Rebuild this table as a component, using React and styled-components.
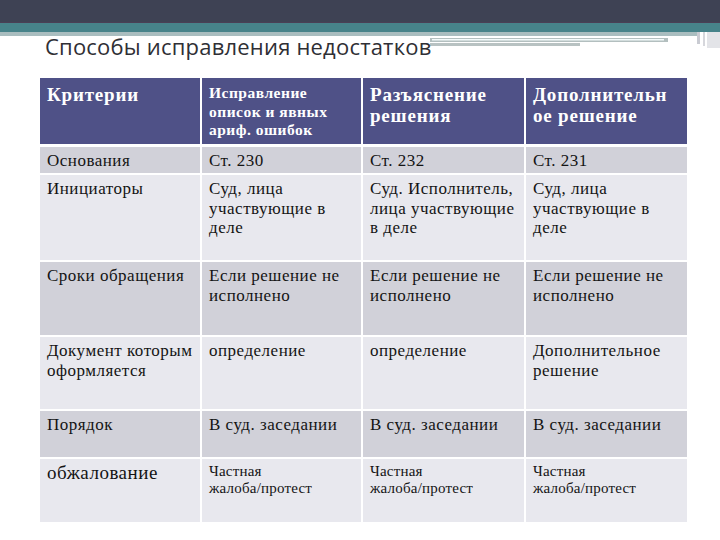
import React from 'react';
import styled, { createGlobalStyle } from 'styled-components';

const GlobalStyle = createGlobalStyle`
  html, body {
    margin: 0;
    padding: 0;
    background: #ffffff;
  }
  body {
    width: 720px;
    height: 540px;
    overflow: hidden;
  }
`;

const serif = '"Liberation Serif", "Times New Roman", serif';

const Slide = styled.div`
  position: relative;
  width: 720px;
  height: 540px;
  background: #ffffff;
`;

const DarkBand = styled.div`
  height: 23px;
  background: #3e4254;
  border-bottom: 1px solid #4a3f55;
  box-sizing: border-box;
`;

const TealBand = styled.div`
  height: 9px;
  background: #47838a;
`;

const TitleRow = styled.div`
  position: relative;
  height: 46px;
  padding-left: 45px;
  box-sizing: border-box;
`;

const Decor = styled.svg`
  position: absolute;
  left: 0;
  top: 0;
  pointer-events: none;
`;

const Title = styled.h1`
  position: relative;
  margin: 0;
  padding-top: 1px;
  font-family: "Open Sans", "DejaVu Sans", sans-serif;
  font-weight: 400;
  font-size: 22px;
  line-height: 26px;
  letter-spacing: 0.2px;
  color: #2f2f35;
`;

const TableWrap = styled.div`
  padding-left: 40px;
`;

const Table = styled.table`
  width: 647px;
  border-collapse: collapse;
  table-layout: fixed;
  font-family: ${serif};
  color: #141414;
`;

const HeadCell = styled.th`
  background: #4f5187;
  color: #ffffff;
  font-family: ${serif};
  text-align: left;
  vertical-align: top;
  font-weight: 700;
  font-size: ${p => (p.$small ? '15.5px' : '19px')};
  letter-spacing: ${p => (p.$small ? '0.5px' : '0.8px')};
  line-height: ${p => (p.$small ? '18.5px' : '20.5px')};
  padding: ${p => (p.$small ? '6px 4px 0 7px' : '7px 2px 0 7px')};
  border-left: 2px solid #ffffff;
  border-right: 2px solid #ffffff;
  border-bottom: 3px solid #ffffff;
  height: ${p => p.$h}px;
  box-sizing: border-box;
  &:first-child {
    border-left: none;
  }
  &:last-child {
    border-right: none;
  }
`;

const Row = styled.tr`
  background: ${p => (p.$dark ? '#d1d1d9' : '#e8e8ee')};
`;

const Cell = styled.td`
  font-family: ${serif};
  vertical-align: top;
  text-align: left;
  font-size: ${p => (p.$size === 'big' ? '19px' : p.$size === 'small' ? '15px' : '17px')};
  letter-spacing: ${p => (p.$size === 'small' ? '0.2px' : '0.5px')};
  line-height: ${p => (p.$size === 'small' ? '17px' : '19.5px')};
  padding: 4px 4px 0 7px;
  height: ${p => p.$h}px;
  box-sizing: border-box;
  border: 2px solid #ffffff;
  border-top: none;
  &:first-child {
    border-left: none;
  }
  &:last-child {
    border-right: none;
  }
`;

const NoWrap = styled.span`
  white-space: nowrap;
`;

const header = [
  { text: 'Критерии' },
  { text: 'Исправление описок и явных ариф. ошибок', small: true },
  { text: 'Разъяснение решения' },
  { text: <>Дополнительн<br />ое решение</> },
];

const appeal = <>Частная <NoWrap>жалоба/протест</NoWrap></>;

const rows = [
  { h: 29, dark: true, cells: ['Основания', 'Ст. 230', 'Ст. 232', 'Ст. 231'] },
  {
    h: 87,
    cells: [
      'Инициаторы',
      'Суд, лица участвующие в деле',
      'Суд. Исполнитель, лица участвующие в деле',
      'Суд, лица участвующие в деле',
    ],
  },
  {
    h: 75,
    dark: true,
    cells: ['Сроки обращения', 'Если решение не исполнено', 'Если решение не исполнено', 'Если решение не исполнено'],
  },
  {
    h: 74,
    cells: ['Документ которым оформляется', 'определение', 'определение', 'Дополнительное решение'],
  },
  {
    h: 48,
    dark: true,
    cells: ['Порядок', 'В суд. заседании', 'В суд. заседании', 'В суд. заседании'],
  },
  {
    h: 65,
    last: true,
    cells: ['обжалование', appeal, appeal, appeal],
  },
];

const cellSize = (row, i) => {
  if (!row.last) return 'normal';
  return i === 0 ? 'big' : 'small';
};

export default function App() {
  return (
    <Slide>
      <GlobalStyle />
      <DarkBand />
      <TealBand />
      <TitleRow>
        <Decor width="720" height="46" viewBox="0 0 720 46">
          <rect x="0" y="0" width="697" height="4" fill="#a9bdbf" />
          <rect x="430" y="6" width="238" height="4" fill="#b3bfbf" />
          <rect x="432" y="7" width="232" height="1.5" fill="#f4fbfb" />
          <rect x="430" y="11" width="150" height="3" fill="#b8c2c2" />
          <rect x="697" y="-32" width="3" height="44" fill="#c9cbd2" />
          <rect x="703" y="-32" width="2" height="46" fill="#d6d7dc" />
          <rect x="707" y="-32" width="13" height="48" fill="#e3e4e8" />
        </Decor>
        <Title>Способы исправления недостатков</Title>
      </TitleRow>
      <TableWrap>
        <Table>
          <colgroup>
            <col style={{ width: 161 }} />
            <col style={{ width: 161 }} />
            <col style={{ width: 163 }} />
            <col style={{ width: 162 }} />
          </colgroup>
          <thead>
            <tr>
              {header.map((h, i) => (
                <HeadCell key={i} $small={h.small} $h={67}>
                  {h.text}
                </HeadCell>
              ))}
            </tr>
          </thead>
          <tbody>
            {rows.map((r, ri) => (
              <Row key={ri} $dark={r.dark}>
                {r.cells.map((c, ci) => (
                  <Cell key={ci} $h={r.h} $size={cellSize(r, ci)}>
                    {c}
                  </Cell>
                ))}
              </Row>
            ))}
          </tbody>
        </Table>
      </TableWrap>
    </Slide>
  );
}
